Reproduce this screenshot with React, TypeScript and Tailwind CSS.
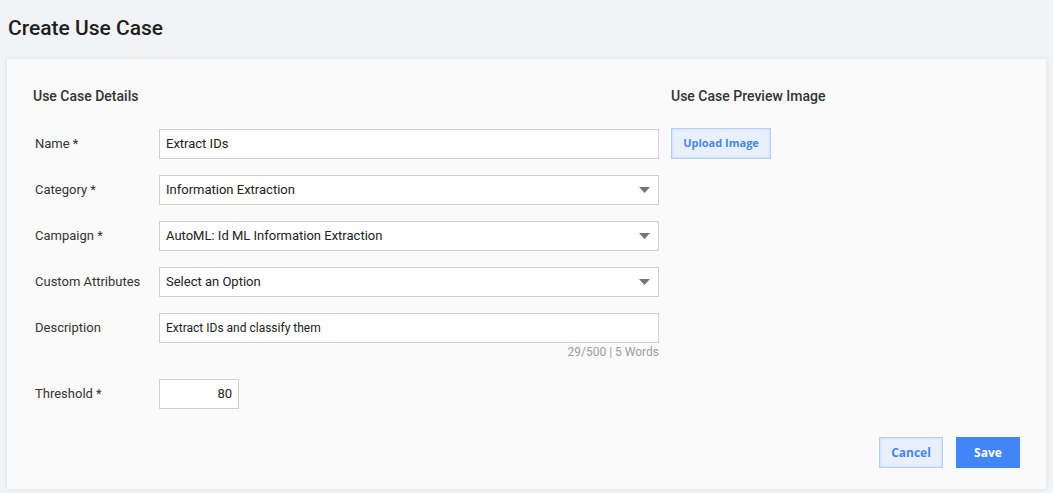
import React from 'react'

const Caret = () => (
  <svg width="11" height="6" viewBox="0 0 11 6" className="shrink-0">
    <path d="M0 0h11L5.5 6z" fill="#757575" />
  </svg>
)

const Row: React.FC<{ label: string; children: React.ReactNode }> = ({ label, children }) => (
  <div className="flex items-center">
    <label className="w-[126px] shrink-0 pl-[2px] text-[13px] text-[#333]">{label}</label>
    {children}
  </div>
)

const Select: React.FC<{ value: string }> = ({ value }) => (
  <div className="flex h-[30px] w-[500px] items-center justify-between border border-[#cfcfcf] bg-white pl-[6px] pr-[8px] text-[13px] text-[#222]">
    <span>{value}</span>
    <Caret />
  </div>
)

export default function App() {
  return (
    <main className="min-h-[493px] bg-[#f2f3f7] font-['Roboto',sans-serif]">
      <div className="h-[59px] pl-2 pt-[15px]">
        <h1 className="text-[21px] font-medium leading-[26px] text-[#1e1e1e]">Create Use Case</h1>
      </div>

      <section className="ml-[7px] h-[430px] w-[1039px] bg-[#fafafa] px-[26px] pt-[29px] shadow-[0_0_4px_rgba(0,0,0,0.1)] flex flex-col">
        <div className="flex gap-[12px]">
          {/* Left column */}
          <div className="w-[626px]">
            <h2 className="text-[14px] font-medium leading-[17px] text-[#333]">Use Case Details</h2>
            <div className="mt-[24px] flex flex-col gap-[16px]">
              <Row label="Name *">
                <div className="flex h-[30px] w-[500px] items-center border border-[#cfcfcf] bg-white px-[6px] text-[13px] text-[#222]">
                  Extract IDs
                </div>
              </Row>
              <Row label="Category *">
                <Select value="Information Extraction" />
              </Row>
              <Row label="Campaign *">
                <Select value="AutoML: Id ML Information Extraction" />
              </Row>
              <Row label="Custom Attributes">
                <Select value="Select an Option" />
              </Row>
              <div>
                <Row label="Description">
                  <div className="flex h-[30px] w-[500px] items-center border border-[#cfcfcf] bg-white px-[6px] text-[12px] text-[#222]">
                    Extract IDs and classify them
                  </div>
                </Row>
                <div className="mt-[1px] w-[626px] text-right text-[12px] leading-[16px] text-[#9e9e9e]">
                  29/500 | 5 Words
                </div>
              </div>
              <div className="pt-[3px]">
                <Row label="Threshold *">
                  <div className="flex h-[30px] w-[80px] items-center justify-end border border-[#cfcfcf] bg-white px-[6px] text-[13px] text-[#222]">
                    80
                  </div>
                </Row>
              </div>
            </div>
          </div>

          {/* Right column */}
          <div>
            <h2 className="text-[14px] font-medium leading-[17px] text-[#333]">Use Case Preview Image</h2>
            <button className="mt-[23px] h-[31px] w-[100px] border border-[#b6cff8] bg-[#e8f0fe] font-['Open_Sans',sans-serif] text-[11px] font-bold text-[#4a86e8] shadow-[inset_0_0_3px_rgba(66,133,244,0.25)]">
              Upload Image
            </button>
          </div>
        </div>

        <div className="mt-auto mb-[21px] flex justify-end gap-[13px]">
          <button className="h-[31px] w-[64px] border border-[#b6cff8] bg-[#e8f0fe] font-['Open_Sans',sans-serif] text-[12px] font-bold text-[#4a86e8] shadow-[inset_0_0_3px_rgba(66,133,244,0.25)]">
            Cancel
          </button>
          <button className="h-[31px] w-[64px] bg-[#4285f4] font-['Open_Sans',sans-serif] text-[12px] font-bold text-white">
            Save
          </button>
        </div>
      </section>
    </main>
  )
}
